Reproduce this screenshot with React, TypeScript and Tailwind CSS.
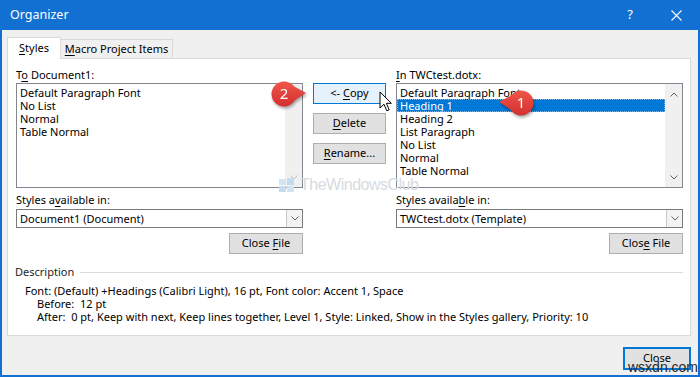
import React from 'react';

function U({ children }: { children: React.ReactNode }) {
  return <span className="underline decoration-1 underline-offset-[2px]">{children}</span>;
}

function Chevron({ up = false, color = '#606060' }: { up?: boolean; color?: string }) {
  return (
    <svg width="8" height="5" viewBox="0 0 8 5">
      <path d={up ? 'M0.5 4.5 L4 1 L7.5 4.5' : 'M0.5 0.5 L4 4 L7.5 0.5'} fill="none" stroke={color} strokeWidth="1" />
    </svg>
  );
}

function Btn({ children, active = false, className = '' }: { children: React.ReactNode; active?: boolean; className?: string }) {
  return (
    <div
      className={`h-[21px] flex items-center justify-center border text-[11px] text-black ${
        active ? 'border-[#0078d7] bg-[#e5f1fb]' : 'border-[#adadad] bg-[#e1e1e1]'
      } ${className}`}
    >
      <span className="whitespace-pre">{children}</span>
    </div>
  );
}

function ListBox({ items, selected, disabled }: { items: string[]; selected?: number; disabled?: boolean }) {
  const arrow = disabled ? '#bfbfbf' : '#606060';
  return (
    <div className="h-[105px] border border-[#828790] bg-white flex">
      <div className="flex-1 pt-[2px]">
        {items.map((it, i) => (
          <div
            key={it}
            className={`h-[13px] leading-[13px] pl-[3px] text-[11px] whitespace-nowrap ${
              i === selected ? 'bg-[#0078d7] text-white outline-1 outline-dotted outline-[#7fb9ea] -outline-offset-1' : 'text-black'
            }`}
          >
            {it}
          </div>
        ))}
      </div>
      <div className="w-[17px] bg-[#f0f0f0] flex flex-col justify-between items-center pt-[8px] pb-[7px]">
        <Chevron up color={arrow} />
        <Chevron color={arrow} />
      </div>
    </div>
  );
}

function Combo({ value }: { value: string }) {
  return (
    <div className="h-[19px] border border-[#7a7a7a] bg-white flex mt-[1px]">
      <div className="flex-1 pl-[3px] text-[11px] leading-[17px] text-black">{value}</div>
      <div className="w-[16px] border-l border-[#c8c8c8] bg-[#f3f3f3] flex items-center justify-center">
        <Chevron />
      </div>
    </div>
  );
}

function Marker({ n, dir }: { n: string; dir: 'left' | 'right' }) {
  return (
    <svg width="40" height="30" viewBox="0 0 40 30" className="drop-shadow-[1px_2px_1.5px_rgba(0,0,0,0.35)]">
      <defs>
        <linearGradient id={`g${n}`} x1="0" y1="0" x2="0" y2="1">
          <stop offset="0" stopColor="#f0564a" />
          <stop offset="1" stopColor="#d32f2f" />
        </linearGradient>
      </defs>
      {dir === 'right' ? (
        <>
          <polygon points="16,2.5 37,14 16,27.5" fill={`url(#g${n})`} />
          <circle cx="15" cy="15" r="12.5" fill={`url(#g${n})`} />
          <text x="15" y="20" textAnchor="middle" fontSize="15" fill="#fff" fontFamily="Noto Sans, sans-serif">{n}</text>
        </>
      ) : (
        <>
          <polygon points="24,2.5 3,14 24,27.5" fill={`url(#g${n})`} />
          <circle cx="25" cy="15" r="12.5" fill={`url(#g${n})`} />
          <text x="25" y="20" textAnchor="middle" fontSize="15" fill="#fff" fontFamily="Noto Sans, sans-serif">{n}</text>
        </>
      )}
    </svg>
  );
}

export default function App() {
  return (
    <div className="relative w-[700px] h-[377px] flex flex-col bg-[#f0f0f0] border-x-2 border-b-2 border-[#1170d1] font-['Noto_Sans',sans-serif] overflow-hidden">
      {/* title bar */}
      <div className="h-[30px] bg-[#1170d1] flex items-center text-white -mx-[2px]">
        <div className="pl-[10px] text-[12.5px] flex-1">Organizer</div>
        <div className="w-[46px] text-center text-[13px]">?</div>
        <div className="w-[46px] flex items-center justify-center mr-[1px]">
          <svg width="11" height="11" viewBox="0 0 11 11">
            <path d="M0.5 0.5 L10.5 10.5 M10.5 0.5 L0.5 10.5" stroke="#fff" strokeWidth="1.1" />
          </svg>
        </div>
      </div>

      <div className="pl-[5px] pr-[7px] pt-[7px] flex flex-col">
        {/* tabs */}
        <div className="flex items-end h-[21px] relative z-10">
          <div className="h-[22px] -mb-px w-[54px] bg-white border-x border-t border-[#d9d9d9] flex items-center justify-center text-[11px] text-black">
            <span className="whitespace-pre"><U>S</U>tyles</span>
          </div>
          <div className="h-[19px] w-[112px] border-x border-t border-[#d9d9d9] border-l-0 flex items-center justify-center text-[11px] text-black">
            <span className="whitespace-pre"><U>M</U>acro Project Items</span>
          </div>
        </div>

        {/* panel */}
        <div className="h-[278px] bg-white border border-[#d9d9d9] pl-[8px] pr-[7px] pt-[8px]">
          <div className="flex gap-x-[10px]">
            <div className="w-[287px] flex flex-col">
              <div className="h-[16px] leading-[16px] text-[11px] text-black">
                T<U>o</U> Document1:
              </div>
              <ListBox items={['Default Paragraph Font', 'No List', 'Normal', 'Table Normal']} disabled />
              <div className="h-[16px] leading-[16px] text-[11px] text-black mt-[4px]">
                Styles a<U>v</U>ailable in:
              </div>
              <Combo value="Document1 (Document)" />
              <div className="flex justify-end mt-[5px]">
                <Btn className="w-[74px]">
                  {'Close '}<U>F</U>ile
                </Btn>
              </div>
            </div>

            <div className="w-[73px] flex flex-col gap-y-[9px] pt-[16px]">
              <Btn active>
                {'<- '}<U>C</U>opy
              </Btn>
              <Btn>
                <U>D</U>elete
              </Btn>
              <Btn>
                <U>R</U>ename...
              </Btn>
            </div>

            <div className="w-[287px] flex flex-col">
              <div className="h-[16px] leading-[16px] text-[11px] text-black">
                <U>I</U>n TWCtest.dotx:
              </div>
              <ListBox
                items={['Default Paragraph Font', 'Heading 1', 'Heading 2', 'List Paragraph', 'No List', 'Normal', 'Table Normal']}
                selected={1}
              />
              <div className="h-[16px] leading-[16px] text-[11px] text-black mt-[4px]">
                Styles availa<U>b</U>le in:
              </div>
              <Combo value="TWCtest.dotx (Template)" />
              <div className="flex justify-end mt-[5px]">
                <Btn className="w-[74px]">
                  Clos<U>e</U>{' File'}
                </Btn>
              </div>
            </div>
          </div>

          {/* description */}
          <div className="flex items-center gap-x-[6px] mt-[11px] -ml-[1px]">
            <div className="h-[14px] leading-[14px] text-[11px] text-[#1e1e1e]">Description</div>
            <div className="flex-1 h-px bg-[#dcdcdc]" />
          </div>
          <div className="mt-[5px] pl-[9px] text-[11px] leading-[13px] text-black">
            <div>Font: (Default) +Headings (Calibri Light), 16 pt, Font color: Accent 1, Space</div>
            <div className="pl-[12px]">Before: &nbsp;12 pt</div>
            <div className="pl-[12px]">
              After: &nbsp;0 pt, Keep with next, Keep lines together, Level 1, Style: Linked, Show in the Styles gallery, Priority: 10
            </div>
          </div>
        </div>

        {/* bottom */}
        <div className="flex justify-end mt-[11px]">
          <div className="w-[68px] h-[23px] border-2 border-[#0078d7] bg-[#e1e1e1] flex items-center justify-center text-[11px] text-black">
            Close
          </div>
        </div>
      </div>

      {/* annotation overlays */}
      <div className="absolute left-[267px] top-[79px]">
        <Marker n="2" dir="right" />
      </div>
      <div className="absolute left-[494px] top-[88px]">
        <Marker n="1" dir="left" />
      </div>
      <div className="absolute left-[377px] top-[91px]">
        <svg width="14" height="22" viewBox="0 0 14 22">
          <path d="M1 1 L1 17 L5 13.2 L7.8 19.8 L10.2 18.8 L7.4 12.3 L12.4 12.3 Z" fill="#fff" stroke="#000" strokeWidth="1" strokeLinejoin="round" />
        </svg>
      </div>

      {/* watermarks */}
      <div className="absolute left-[276px] top-[176px] flex items-center gap-x-[4px] pointer-events-none">
        <svg width="18" height="16" viewBox="0 0 18 16">
          <rect x="1" y="2" width="7" height="6" fill="#d2e3f2" />
          <rect x="9" y="1" width="7" height="7" fill="#c3daef" />
          <rect x="1" y="9" width="7" height="6" fill="#c3daef" />
          <rect x="9" y="9" width="7" height="6" fill="#d2e3f2" />
        </svg>
        <div className="text-[16px] leading-[17px] text-[#d6dbe0] font-['Liberation_Sans',sans-serif] tracking-[-0.5px]">TheWindowsClub</div>
      </div>
      <div className="absolute left-[626px] top-[359px] text-[14px] leading-[16px] text-[#2a2a2a] font-['Liberation_Sans',sans-serif]">
        wsxdn.com
      </div>
    </div>
  );
}
